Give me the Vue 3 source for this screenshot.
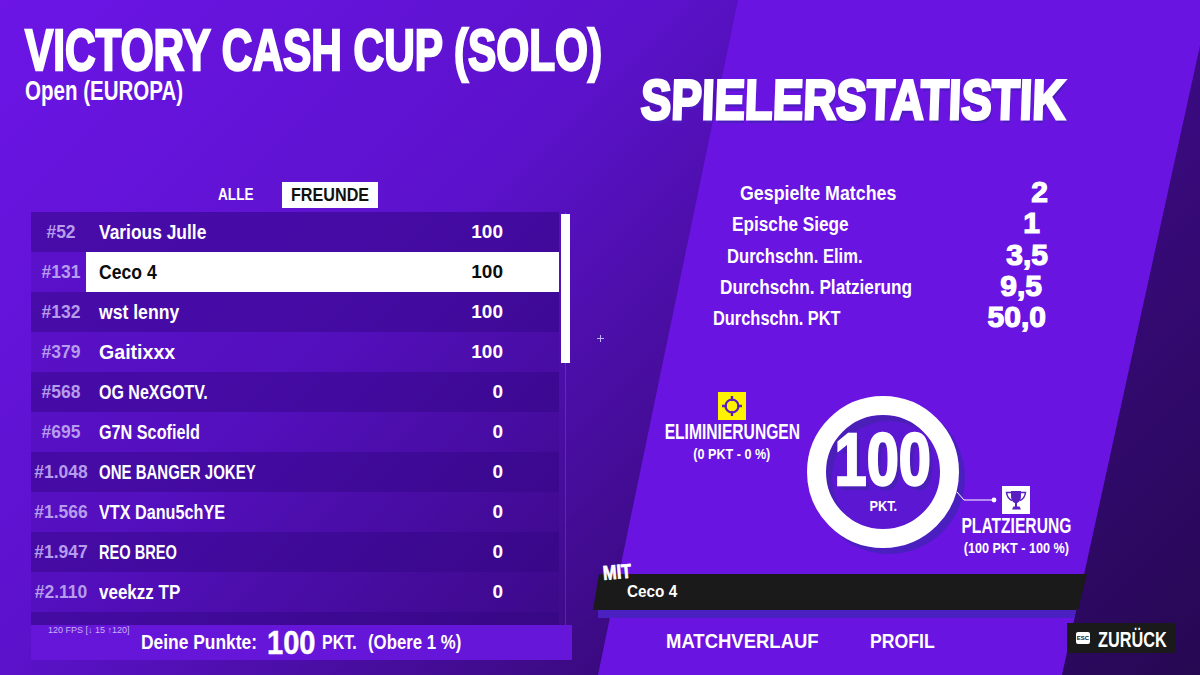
<script setup>
// sx squeezes each name to the narrow width of the game's font
const rows = [
  { rank: "#52", name: "Various Julle", sx: 0.87, score: 100 },
  { rank: "#131", name: "Ceco 4", sx: 0.88, score: 100, me: true },
  { rank: "#132", name: "wst lenny", sx: 0.88, score: 100 },
  { rank: "#379", name: "Gaitixxx", sx: 0.98, score: 100 },
  { rank: "#568", name: "OG NeXGOTV.", sx: 0.8, score: 0 },
  { rank: "#695", name: "G7N Scofield", sx: 0.81, score: 0 },
  { rank: "#1.048", name: "ONE BANGER JOKEY", sx: 0.75, score: 0 },
  { rank: "#1.566", name: "VTX Danu5chYE", sx: 0.81, score: 0 },
  { rank: "#1.947", name: "REO BREO", sx: 0.73, score: 0 },
  { rank: "#2.110", name: "veekzz TP", sx: 0.85, score: 0 },
  { rank: "", name: "", sx: 1, score: 0 },
];

const stats = [
  { label: "Gespielte Matches", value: "2", left: 140, right: 152, sx: 0.89 },
  { label: "Epische Siege", value: "1", left: 132, right: 160, sx: 0.86 },
  { label: "Durchschn. Elim.", value: "3,5", left: 127, right: 152, sx: 0.83 },
  { label: "Durchschn. Platzierung", value: "9,5", left: 120, right: 158, sx: 0.86 },
  { label: "Durchschn. PKT", value: "50,0", left: 113, right: 154, sx: 0.82 },
];
</script>

<template>
  <div class="stage">
    <div class="panel"></div>

    <div class="left">
      <h1 class="title"><span>VICTORY CASH CUP (SOLO)</span></h1>
      <div class="subtitle"><span>Open (EUROPA)</span></div>

      <div class="tabs">
        <span class="tab"><span>ALLE</span></span>
        <span class="tab active"><span>FREUNDE</span></span>
      </div>

      <div class="list">
        <div v-for="(row, i) in rows" :key="i" class="row" :class="{ odd: i % 2 === 0 }">
          <span class="rank">{{ row.rank }}</span>
          <div class="entry" :class="{ me: row.me }">
            <span class="name" :style="{ transform: `scaleX(${row.sx})` }">{{ row.name }}</span>
            <span class="score">{{ row.score }}</span>
          </div>
        </div>
        <div class="track"></div>
        <div class="thumb"></div>
      </div>

      <div class="footer">
        <span class="fps">120 FPS [↓ 15 ↑120]</span>
        <span class="foot f1">Deine Punkte:</span>
        <span class="foot f2">100</span>
        <span class="foot f3">PKT.</span>
        <span class="foot f4">(Obere 1 %)</span>
      </div>
    </div>

    <div class="right">
      <h2 class="heading">SPIELERSTATISTIK</h2>

      <div class="stats">
        <div
          v-for="s in stats"
          :key="s.label"
          class="stat"
          :style="{ paddingLeft: s.left + 'px', paddingRight: s.right + 'px' }"
        >
          <span class="stat-label" :style="{ transform: `scaleX(${s.sx})` }">{{ s.label }}</span>
          <b>{{ s.value }}</b>
        </div>
      </div>

      <div class="chart">
        <div class="ring">
          <span class="ring-num">100</span>
          <span class="ring-unit">PKT.</span>
        </div>

        <div class="legend elim">
          <svg class="badge" viewBox="0 0 28 28" width="28" height="28">
            <rect width="28" height="28" fill="#fff200" />
            <circle cx="14" cy="14" r="6.500" fill="none" stroke="#5a1fc0" stroke-width="2.200" />
            <path d="M14 4v5M14 19v5M4 14h5M19 14h5" stroke="#5a1fc0" stroke-width="2.400" />
          </svg>
          <strong>ELIMINIERUNGEN</strong>
          <small>(0 PKT - 0 %)</small>
        </div>

        <svg class="wire" viewBox="0 0 44 14" width="44" height="14">
          <path d="M1 1l7 8h30" fill="none" stroke="#fff" stroke-width="1" />
          <circle cx="38" cy="9" r="2.400" fill="#fff" />
        </svg>

        <div class="legend place">
          <svg class="badge" viewBox="0 0 28 28" width="28" height="28">
            <rect width="28" height="28" fill="#fff" />
            <path
              d="M9 5h10v5c0 4-2 6.500-4 7v3.500h2.500l1.500 3h-9l1.500-3H13V17c-2-.5-4-3-4-7z"
              fill="#5a1fc0"
            />
            <path
              d="M9 6.500H4.500c.5 4 2 6.500 5.500 8M19 6.500h4.500c-.5 4-2 6.500-5.500 8"
              fill="none"
              stroke="#5a1fc0"
              stroke-width="1.500"
            />
          </svg>
          <strong>PLATZIERUNG</strong>
          <small>(100 PKT - 100 %)</small>
        </div>
      </div>

      <div class="teammate">
        <div class="bar-shadow"></div>
        <div class="bar"></div>
        <span class="mit">MIT</span>
        <span class="mate">Ceco 4</span>
      </div>

      <div class="bottom">
        <span class="link first">MATCHVERLAUF</span>
        <span class="link second">PROFIL</span>
        <button class="back">
          <span class="esc">ESC</span>
          <span class="back-text">ZURÜCK</span>
        </button>
      </div>
    </div>

    <svg class="cursor" viewBox="0 0 7 7" width="7" height="7">
      <path d="M3.500 0v7M0 3.500h7" stroke="#b9b4ff" stroke-width="1" />
    </svg>
  </div>
</template>

<style>
html,
body {
  margin: 0;
  background: #2b0a5e;
}
</style>

<style scoped>
.stage {
  position: relative;
  width: 1200px;
  height: 675px;
  overflow: hidden;
  display: flex;
  color: #fff;
  font-family: "Liberation Sans", sans-serif;
  font-weight: 700;
  background: linear-gradient(135deg, #6c15e6 0%, #5c12cc 35%, #3a0a80 68%, #260852 100%);
}

.panel {
  position: absolute;
  inset: 0;
  background: #6a14e2;
  clip-path: polygon(738px 0, 1210px 0, 1062px 675px, 598px 675px);
}

.left,
.right {
  position: relative;
  width: 600px;
  flex: none;
}

.left {
  padding: 21px 28px 0 25px;
  box-sizing: border-box;
}

.title {
  margin: 0;
  font-size: 58px;
  line-height: 57px;
  white-space: nowrap;
  -webkit-text-stroke: 2.400px #fff;
}

.title span {
  display: inline-block;
  transform: scaleX(0.73);
  transform-origin: left;
}

.subtitle {
  font-size: 27px;
  line-height: 26px;
  white-space: nowrap;
}

.subtitle span {
  display: inline-block;
  transform: scaleX(0.76);
  transform-origin: left;
}

.tabs {
  display: flex;
  align-items: center;
  height: 26px;
  margin: 78px 0 4px 193px;
}

.tab {
  width: 35px;
  margin-right: 29px;
  font-size: 17px;
  white-space: nowrap;
}

.tab span {
  display: inline-block;
  transform: scaleX(0.8);
  transform-origin: left;
}

.tab.active {
  width: 78px;
  padding: 0 9px;
  height: 26px;
  line-height: 26px;
  background: #fff;
  color: #111;
  font-size: 19px;
}

.tab.active span {
  transform: scaleX(0.85);
}

.list {
  position: relative;
  width: 541px;
  height: 413px;
  margin-left: 6px;
  overflow: hidden;
}

.row {
  display: flex;
  height: 40px;
  width: 528px;
  font-size: 20px;
  line-height: 40px;
  background: rgba(50, 5, 130, 0.18);
}

.row.odd {
  background: rgba(50, 5, 130, 0.55);
}

.rank {
  width: 60px;
  margin-right: -5px;
  flex: none;
  text-align: center;
  color: #b69cec;
  font-size: 19px;
  white-space: nowrap;
  transform: scaleX(0.92);
}

.entry {
  flex: 1;
  display: flex;
  justify-content: space-between;
  padding: 0 56px 0 13px;
  white-space: nowrap;
  position: relative;
}

.entry.me {
  background: #fff;
  color: #0c0c0c;
}

.name {
  display: inline-block;
  transform-origin: left;
}

.score {
  display: inline-block;
  font-size: 19px;
}

.track {
  position: absolute;
  left: 534px;
  top: 0;
  bottom: 0;
  width: 1px;
  background: rgba(255, 255, 255, 0.12);
}

.thumb {
  position: absolute;
  left: 530px;
  top: 2px;
  width: 9px;
  height: 149px;
  background: #fff;
}

.footer {
  position: relative;
  display: flex;
  align-items: center;
  width: 541px;
  height: 35px;
  margin-left: 6px;
  padding-left: 110px;
  box-sizing: border-box;
  background: #6516d8;
  font-size: 20px;
  white-space: nowrap;
}

.foot {
  display: inline-block;
  transform-origin: left;
}

.f1 {
  width: 117px;
  margin-right: 9px;
  transform: scaleX(0.87);
}

.f2 {
  width: 48px;
  margin-right: 7px;
  font-size: 33px;
  -webkit-text-stroke: 0.500px #fff;
  transform: scaleX(0.88);
}

.f3 {
  width: 35px;
  margin-right: 11px;
  transform: scaleX(0.8);
}

.f4 {
  width: 93px;
  transform: scaleX(0.84);
}

.fps {
  position: absolute;
  left: 17px;
  top: 0;
  font-size: 9px;
  font-weight: 400;
  color: #c9b3f2;
}

.heading {
  margin: 72px 0 0 40px;
  font-size: 56px;
  line-height: 56px;
  white-space: nowrap;
  transform: skewX(-2deg) scaleX(0.815);
  transform-origin: left bottom;
  -webkit-text-stroke: 3px #fff;
  text-shadow: 2px 4px 0 #4c1cc0;
}

.stats {
  margin-top: 50px;
}

.stat {
  display: flex;
  justify-content: space-between;
  align-items: center;
  height: 31.300px;
  box-sizing: border-box;
  white-space: nowrap;
}

.stat-label {
  display: inline-block;
  font-size: 20px;
  transform-origin: left;
}

.stat b {
  font-size: 30px;
  line-height: 30px;
  margin-top: -3px;
  -webkit-text-stroke: 1.200px #fff;
}

.chart {
  position: relative;
  height: 224px;
}

/* items of the score diagram sit at their own spots around the ring */
.ring {
  position: absolute;
  left: 207px;
  top: 62px;
  width: 152px;
  height: 152px;
  box-sizing: border-box;
  border: 19px solid #fff;
  border-radius: 50%;
  box-shadow: 6px 6px 0 #4a1fc0, inset 6px 6px 0 #4a1fb8;
  background: #5c17d3;
  display: flex;
  flex-direction: column;
  align-items: center;
}

.ring-num {
  font-size: 74px;
  line-height: 56px;
  margin-top: 17px;
  -webkit-text-stroke: 2.500px #fff;
  text-shadow: 5px 5px 0 #4a1fb8;
  transform: scaleX(0.78);
}

.ring-unit {
  font-size: 15px;
  line-height: 17px;
  margin-top: 9px;
  transform: scaleX(0.85);
}

.legend {
  position: absolute;
  display: flex;
  flex-direction: column;
  align-items: center;
  width: 160px;
}

.legend strong {
  font-size: 22px;
  line-height: 26px;
  white-space: nowrap;
  transform: scaleX(0.71);
}

.legend small {
  font-size: 14px;
  line-height: 18px;
  white-space: nowrap;
  transform: scaleX(0.9);
}

.badge {
  display: block;
  margin: 0 0 -1px;
}

.elim {
  left: 52px;
  top: 58px;
}

.place {
  left: 336px;
  top: 152px;
}

.wire {
  position: absolute;
  left: 356px;
  top: 157px;
}

.teammate {
  position: absolute;
  left: -7px;
  top: 574px;
  width: 494px;
  height: 36px;
}

.bar {
  position: absolute;
  inset: 0;
  background: #1a1a1a;
  clip-path: polygon(6px 0, 100% 0, 98.200% 100%, 0 100%);
}

.bar-shadow {
  position: absolute;
  left: 5px;
  right: 12px;
  top: 36px;
  height: 8px;
  background: #4a20c0;
}

.mit {
  position: absolute;
  left: 10px;
  top: -11px;
  font-size: 20px;
  line-height: 20px;
  transform: rotate(-5deg) scaleX(0.82);
  transform-origin: left;
  -webkit-text-stroke: 0.800px #fff;
}

.mate {
  position: absolute;
  left: 34px;
  top: 8px;
  font-size: 17px;
  line-height: 20px;
  transform: scaleX(0.9);
  transform-origin: left;
}

.bottom {
  position: absolute;
  left: 66px;
  top: 623px;
  right: 24px;
  height: 30px;
  display: flex;
  align-items: center;
  font-size: 21px;
  white-space: nowrap;
}

.link {
  display: inline-block;
  margin-top: 6px;
  transform-origin: left;
}

.first {
  width: 154px;
  margin-right: 50px;
  transform: scaleX(0.88);
}

.second {
  width: 65px;
  transform: scaleX(0.84);
}

.back {
  margin-left: auto;
  display: flex;
  align-items: center;
  gap: 8px;
  width: 109px;
  height: 30px;
  padding: 0 0 0 9px;
  box-sizing: border-box;
  border: 0;
  background: #1a1a1a;
  color: #fff;
  font: inherit;
  font-size: 22px;
}

.back-text {
  display: inline-block;
  width: 68px;
  margin-top: 3px;
  transform: scaleX(0.74);
  transform-origin: left;
}

.esc {
  width: 14px;
  height: 12px;
  background: #fff;
  border-radius: 2px;
  color: #111;
  font-size: 6px;
  line-height: 12px;
  text-align: center;
}

.cursor {
  position: absolute;
  left: 597px;
  top: 335px;
}
</style>
